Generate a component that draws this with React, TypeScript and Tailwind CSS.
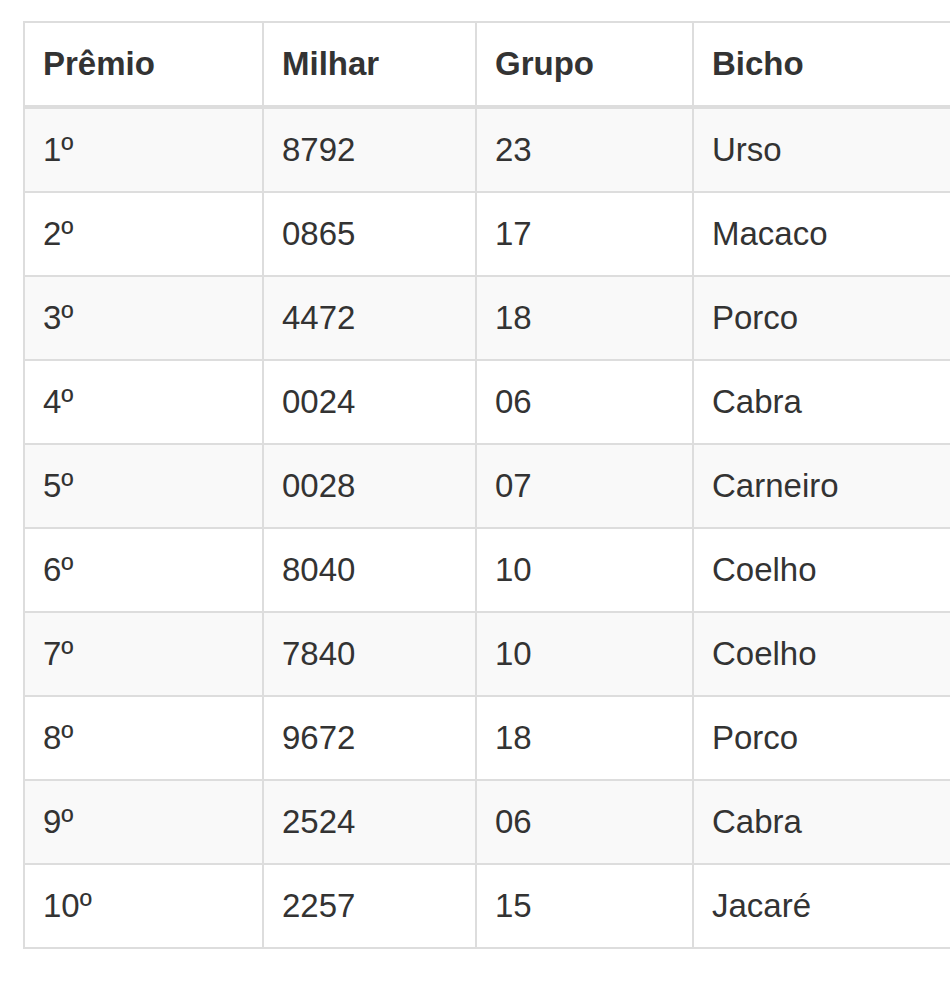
export default function App() {
  const rows = [
    ["1º", "8792", "23", "Urso"],
    ["2º", "0865", "17", "Macaco"],
    ["3º", "4472", "18", "Porco"],
    ["4º", "0024", "06", "Cabra"],
    ["5º", "0028", "07", "Carneiro"],
    ["6º", "8040", "10", "Coelho"],
    ["7º", "7840", "10", "Coelho"],
    ["8º", "9672", "18", "Porco"],
    ["9º", "2524", "06", "Cabra"],
    ["10º", "2257", "15", "Jacaré"],
  ];

  return (
    <div className="w-[950px] h-[981px] bg-white overflow-hidden font-['Liberation_Sans',Arial,sans-serif] text-[#333]">
      <div className="pt-[21px] pl-[23px]">
        <table className="border-collapse table-fixed w-[1000px] text-[33px] leading-[46px]">
          <colgroup>
            <col className="w-[239px]" />
            <col className="w-[213px]" />
            <col className="w-[217px]" />
            <col />
          </colgroup>
          <thead>
            <tr>
              {["Prêmio", "Milhar", "Grupo", "Bicho"].map((h) => (
                <th key={h} className="border-2 border-b-4 border-[#ddd] px-[18px] pt-[18px] pb-[18px] text-left font-bold align-bottom">
                  {h}
                </th>
              ))}
            </tr>
          </thead>
          <tbody>
            {rows.map((r, i) => (
              <tr key={i} className={i % 2 === 0 ? "bg-[#f9f9f9]" : "bg-white"}>
                {r.map((c, j) => (
                  <td key={j} className="border-2 border-[#ddd] px-[18px] py-[18px] align-top">
                    {c}
                  </td>
                ))}
              </tr>
            ))}
          </tbody>
        </table>
      </div>
    </div>
  );
}
